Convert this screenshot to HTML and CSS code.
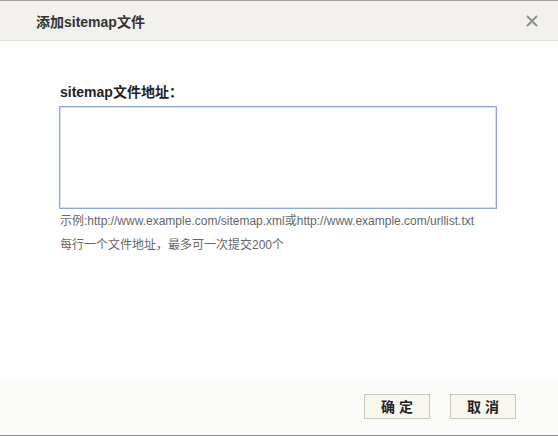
FILE: index.html
```html
<!DOCTYPE html>
<html lang="zh-CN">
<head>
<meta charset="utf-8">
<title>添加sitemap文件</title>
<link rel="stylesheet" href="styles.css">
</head>
<body>
<div class="dialog">
  <div class="header">
    <span class="title">添加sitemap文件</span>
    <span class="close" aria-label="关闭">
      <svg width="12" height="12" viewBox="0 0 12 12"><path d="M1 1L11 11M11 1L1 11" stroke="#8a8a8a" stroke-width="1.8" fill="none"/></svg>
    </span>
  </div>
  <div class="body">
    <div class="label">sitemap文件地址：</div>
    <textarea class="urls"></textarea>
    <div class="hint">示例:http://www.example.com/sitemap.xml或http://www.example.com/urllist.txt</div>
    <div class="hint">每行一个文件地址，最多可一次提交200个</div>
  </div>
  <div class="footer">
    <button class="btn">确定</button>
    <button class="btn">取消</button>
  </div>
</div>
</body>
</html>
```
FILE: styles.css
```css
html, body {
  margin: 0;
  padding: 0;
  background: #fff;
}
body {
  font-family: "Liberation Sans", "Noto Sans CJK SC", sans-serif;
}
.dialog {
  width: 558px;
  height: 436px;
  display: flex;
  flex-direction: column;
  box-sizing: border-box;
  border-top: 1px solid #a09f9c;
  border-bottom: 1px solid #8f8f8f;
}
.header {
  height: 39px;
  background: #f2f1ee;
  border-bottom: 1px solid #dfdedb;
  display: flex;
  align-items: center;
  justify-content: space-between;
  padding: 0 20px 0 36px;
}
.title {
  font-size: 14px;
  font-weight: bold;
  color: #333;
}
.close {
  display: flex;
  width: 12px;
  height: 12px;
}
.body {
  flex: 1;
  padding: 41px 0 0 60px;
  display: flex;
  flex-direction: column;
  align-items: flex-start;
}
.label {
  font-size: 14px;
  font-weight: bold;
  color: #222;
  line-height: 20px;
  margin-bottom: 4px;
}
.urls {
  width: 438px;
  height: 103px;
  box-sizing: border-box;
  margin: 0 0 0 -1px;
  border: 1px solid #8fa7cf;
  box-shadow: inset 0 0 0 1px #d3deee;
  resize: none;
  outline: none;
  padding: 4px;
  font-family: inherit;
}
.hint {
  font-size: 12px;
  color: #666;
  line-height: 24px;
}
.footer {
  height: 58px;
  background: #fbfbfa;
  display: flex;
  align-items: center;
  justify-content: flex-end;
  gap: 20px;
  padding-right: 42px;
}
.btn {
  width: 66px;
  height: 25px;
  box-sizing: border-box;
  border: 1px solid #c9c6bd;
  background: #f9f6ee;
  font-family: "Noto Sans CJK SC", sans-serif;
  font-size: 14px;
  font-weight: bold;
  color: #222;
  letter-spacing: 4px;
  padding: 0 0 0 4px;
  line-height: 23px;
  cursor: pointer;
}
```
